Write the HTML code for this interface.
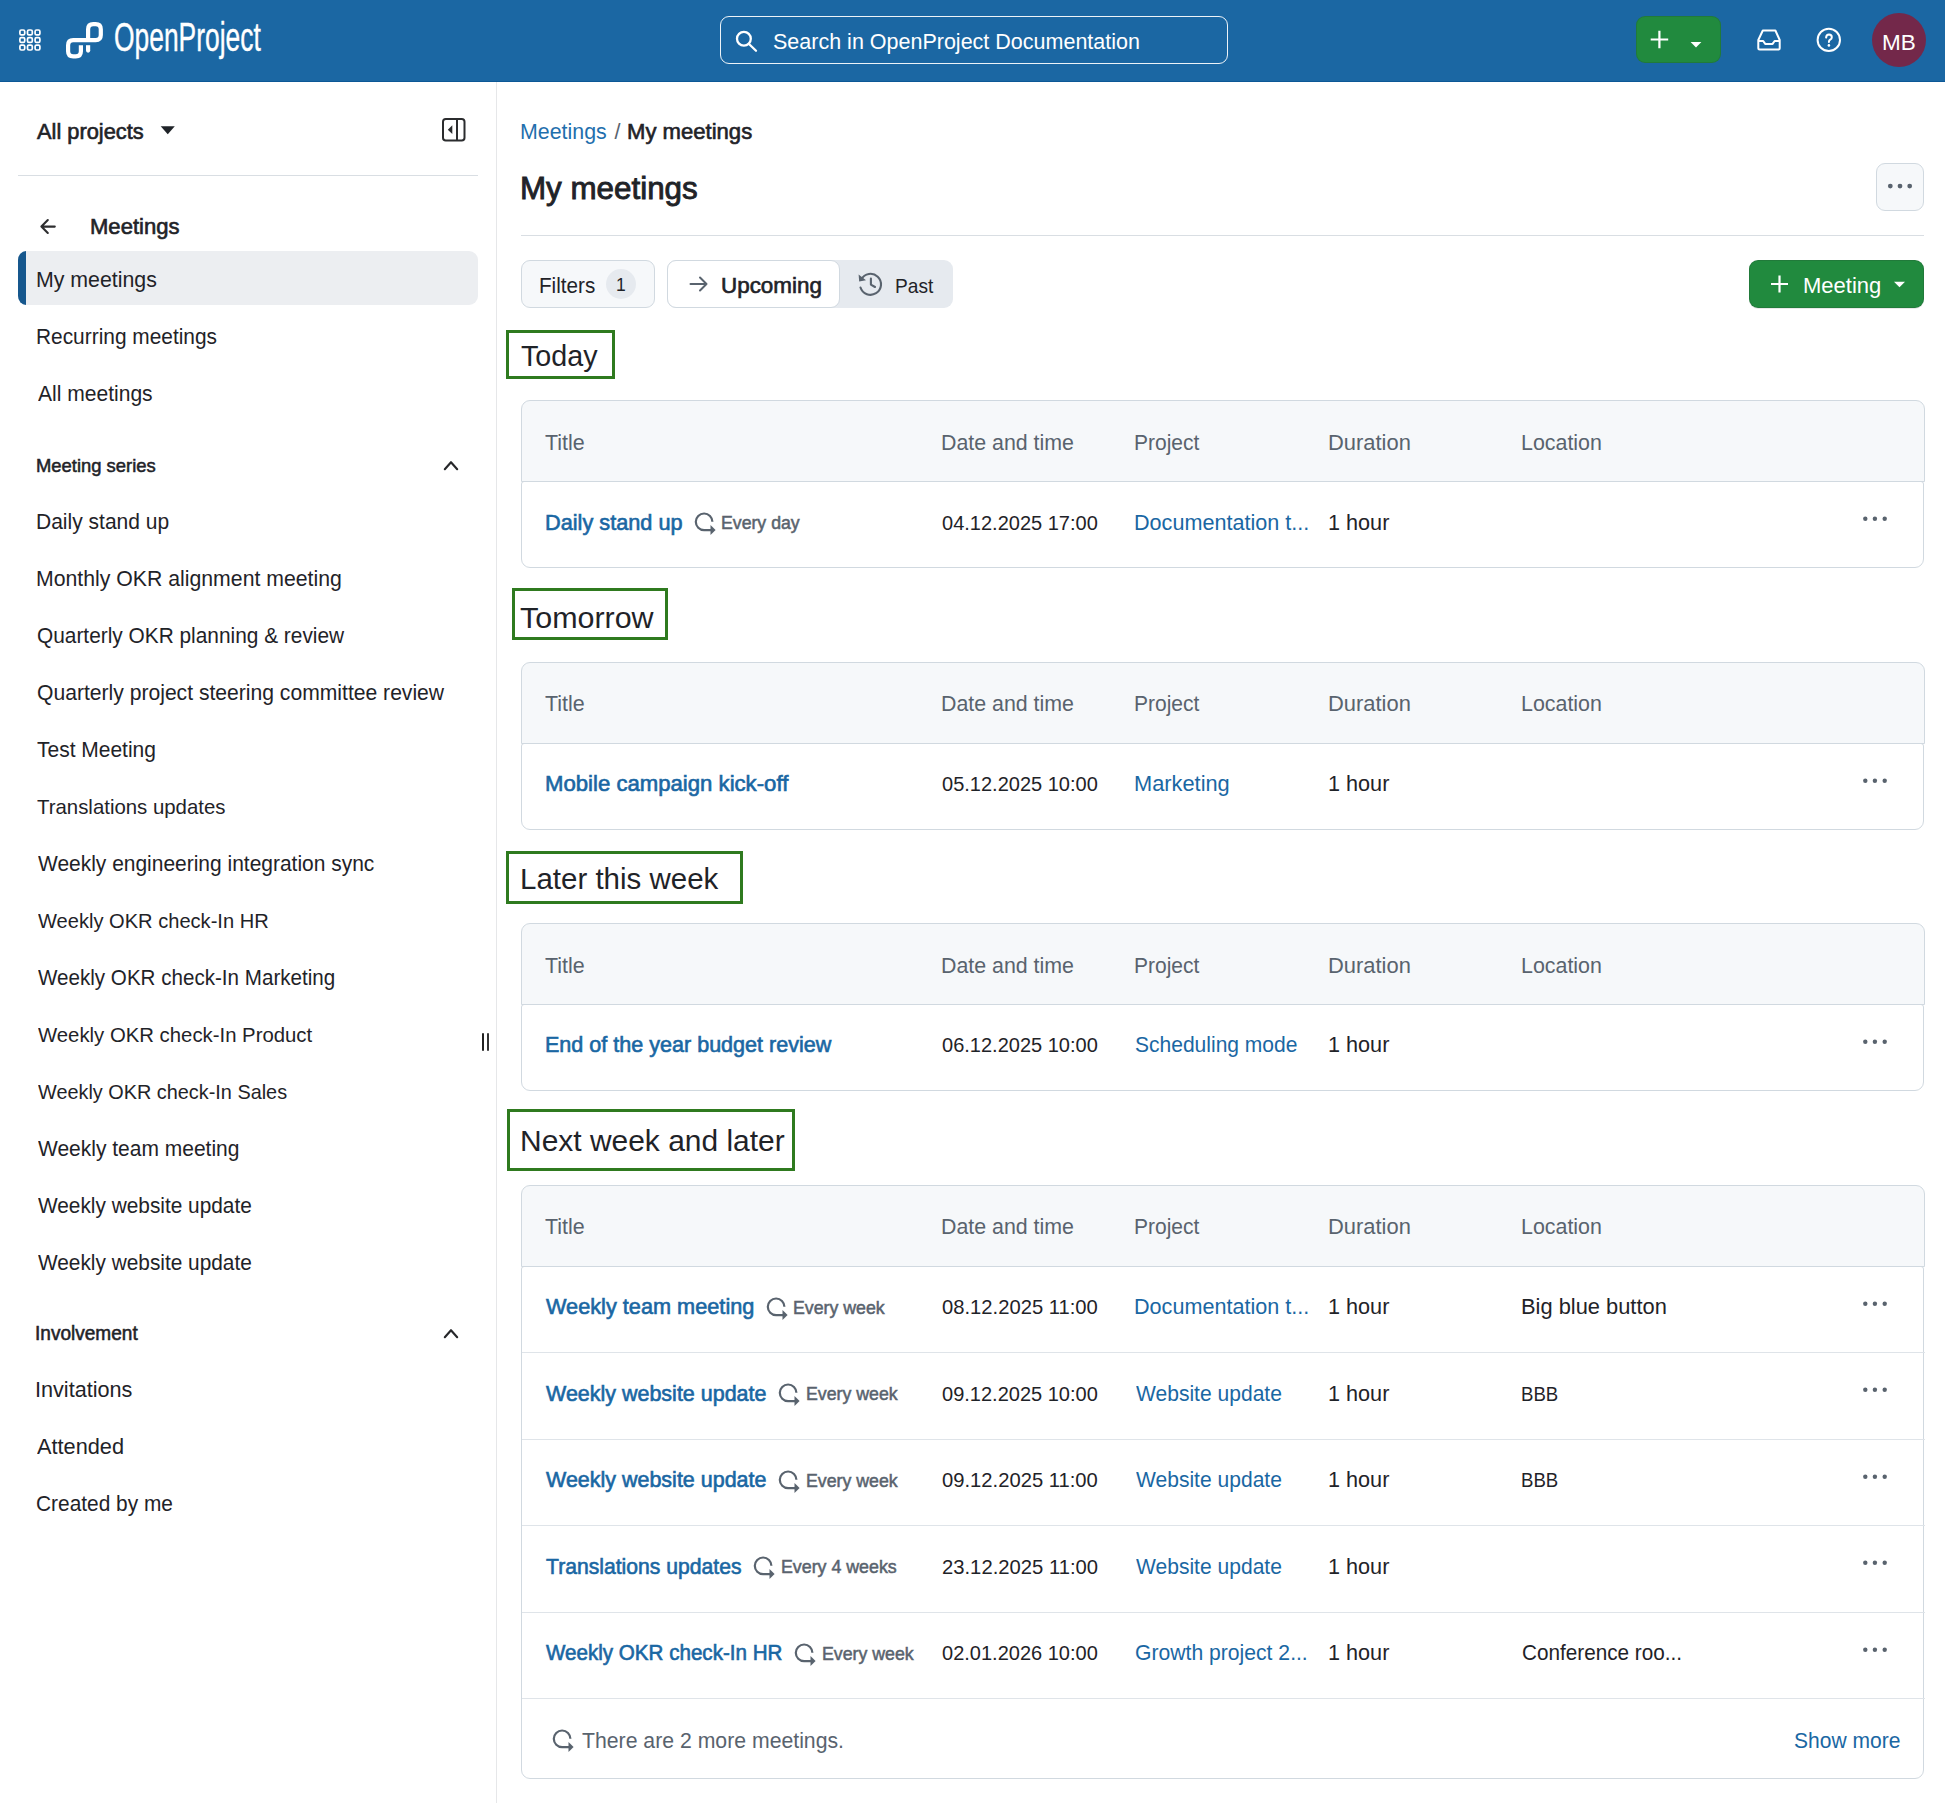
<!DOCTYPE html>
<html><head><meta charset="utf-8"><title>My meetings</title>
<style>
html,body{margin:0;padding:0;background:#fff;}
body{width:1945px;height:1803px;position:relative;overflow:hidden;font-family:"Liberation Sans", sans-serif;}
.t{position:absolute;line-height:1;white-space:nowrap;}
svg{overflow:visible;}
</style></head><body>
<div style="position:absolute;left:0.00px;top:0.00px;width:1945.00px;height:82.00px;background:#1b67a3;"></div>
<div style="position:absolute;left:0.00px;top:81.00px;width:1945.00px;height:1.00px;background:#0c5896;"></div>
<svg style="position:absolute;left:0.00px;top:0.00px;" width="60" height="82" viewBox="0 0 60 82"><rect x="19.90" y="30.00" width="4.8" height="4.8" rx="1.4" fill="none" stroke="#fff" stroke-width="1.7"/><rect x="19.90" y="37.60" width="4.8" height="4.8" rx="1.4" fill="none" stroke="#fff" stroke-width="1.7"/><rect x="19.90" y="45.20" width="4.8" height="4.8" rx="1.4" fill="none" stroke="#fff" stroke-width="1.7"/><rect x="27.50" y="30.00" width="4.8" height="4.8" rx="1.4" fill="none" stroke="#fff" stroke-width="1.7"/><rect x="27.50" y="37.60" width="4.8" height="4.8" rx="1.4" fill="none" stroke="#fff" stroke-width="1.7"/><rect x="27.50" y="45.20" width="4.8" height="4.8" rx="1.4" fill="none" stroke="#fff" stroke-width="1.7"/><rect x="35.10" y="30.00" width="4.8" height="4.8" rx="1.4" fill="none" stroke="#fff" stroke-width="1.7"/><rect x="35.10" y="37.60" width="4.8" height="4.8" rx="1.4" fill="none" stroke="#fff" stroke-width="1.7"/><rect x="35.10" y="45.20" width="4.8" height="4.8" rx="1.4" fill="none" stroke="#fff" stroke-width="1.7"/></svg>
<svg style="position:absolute;left:60.00px;top:18.00px;" width="50" height="45" viewBox="0 0 50 45"><g fill="none" stroke="#fff" stroke-width="4.2" stroke-linecap="round" stroke-linejoin="round" transform="translate(-60,-18)"><path d="M88.1 40 V29.2 Q88.1 24.1 93.2 24.1 H95.7 Q100.8 24.1 100.8 29.2 V35 Q100.8 40.1 95.7 40.1 H73.2 Q68.1 40.1 68.1 45.2 V51.3 Q68.1 56.4 73.2 56.4 H75.8 Q80.9 56.4 80.9 51.3 V45.2" stroke-linecap="butt"/><path d="M88.1 45.2 V50.5" stroke-linecap="butt"/><circle cx="88.1" cy="50.6" r="2.1" fill="#fff" stroke="none"/></g></svg>
<div class="t" style="left:114.40px;top:17px;font-size:40.5px;color:#fff;font-weight:400;transform:scaleX(0.652);transform-origin:0 0;-webkit-text-stroke:0.4px #fff;">OpenProject</div>
<div style="position:absolute;left:720.00px;top:16.00px;width:508.00px;height:48.00px;border:1.5px solid rgba(255,255,255,0.92);border-radius:9px;box-sizing:border-box;"></div>
<svg style="position:absolute;left:730.00px;top:25.00px;" width="32" height="32" viewBox="0 0 32 32"><g fill="none" stroke="#fff" stroke-width="2.3" stroke-linecap="round"><circle cx="13.9" cy="13.8" r="6.9"/><path d="M19 19 L26 25.8"/></g></svg>
<div class="t" style="left:773.03px;top:31px;font-size:22.06px;color:#fff;font-weight:400;transform:scaleX(0.9753);transform-origin:0 0;">Search in OpenProject Documentation</div>
<div style="position:absolute;left:1636.00px;top:16.00px;width:85.00px;height:47.00px;background:#218a3e;border-radius:9px;border:1px solid rgba(31,35,40,0.15);box-sizing:border-box;"></div>
<svg style="position:absolute;left:1636.00px;top:16.00px;" width="85" height="47" viewBox="0 0 85 47"><g stroke="#fff" stroke-width="2.2" fill="none"><path d="M23.4 14.8 V32.3 M14.7 23.5 H32.2"/></g><path d="M54.6 26 L65.4 26 L60 31.5 Z" fill="#fff"/></svg>
<svg style="position:absolute;left:1752.00px;top:24.00px;" width="34" height="32" viewBox="0 0 34 32"><g fill="none" stroke="#fff" stroke-width="2" stroke-linejoin="round"><path d="M10.8 6.5 H23.4 L27.7 16 V24 Q27.7 25.5 26.2 25.5 H7.8 Q6.3 25.5 6.3 24 V16 Z"/><path d="M6.3 17 H11.2 L13.2 19.9 H20.6 L22.6 17 H27.7"/></g></svg>
<svg style="position:absolute;left:1810.00px;top:22.00px;" width="38" height="38" viewBox="0 0 38 38"><circle cx="18.8" cy="17.9" r="11.2" fill="none" stroke="#fff" stroke-width="2"/><path d="M16.1 15.6 Q16.3 12.6 19 12.6 Q21.8 12.7 21.8 15.2 Q21.8 16.8 20.2 17.7 Q18.9 18.4 18.9 20" fill="none" stroke="#fff" stroke-width="2" stroke-linecap="round"/><circle cx="18.9" cy="23.4" r="1.3" fill="#fff"/></svg>
<div style="position:absolute;left:1872.00px;top:13.00px;width:54.00px;height:54.00px;background:#73284a;border-radius:50%;"></div>
<div class="t" style="left:1882.00px;top:32px;font-size:22.5px;color:#fff;font-weight:400;">MB</div>
<div style="position:absolute;left:496.00px;top:82.00px;width:1.00px;height:1721.00px;background:#e6e7e9;"></div>
<div class="t" style="left:37.30px;top:121px;font-size:22.06px;color:#1f2328;font-weight:400;-webkit-text-stroke:0.63px #1f2328;transform:scaleX(0.9888);transform-origin:0 0;">All projects</div>
<svg style="position:absolute;left:158.00px;top:122.00px;" width="20" height="16" viewBox="0 0 20 16"><path d="M2.7 4.2 H16.8 L9.75 12.2 Z" fill="#1f2328"/></svg>
<svg style="position:absolute;left:440.00px;top:116.00px;" width="27" height="27" viewBox="0 0 27 27"><g fill="none" stroke="#2b2c2e" stroke-width="2"><rect x="3" y="3" width="21.5" height="21.5" rx="2.8"/><path d="M17 3 V24.5"/></g><path d="M12.3 9.2 L7.8 13.7 L12.3 18.1 Z" fill="#2b2c2e"/></svg>
<div style="position:absolute;left:18.00px;top:175.00px;width:460.00px;height:1.00px;background:#d9dee3;"></div>
<svg style="position:absolute;left:36.00px;top:216.00px;" width="24" height="22" viewBox="0 0 24 22"><g fill="none" stroke="#2e2e30" stroke-width="2.1" stroke-linecap="round" stroke-linejoin="round"><path d="M5.4 10.6 H18.8 M11.8 4.1 L5.4 10.6 L11.8 17"/></g></svg>
<div class="t" style="left:90.24px;top:216px;font-size:21.63px;color:#1f2328;font-weight:400;-webkit-text-stroke:0.62px #1f2328;transform:scaleX(1.0196);transform-origin:0 0;">Meetings</div>
<div style="position:absolute;left:18.00px;top:251.00px;width:460.00px;height:54.00px;background:#eceef1;border-radius:9px;"></div>
<div style="position:absolute;left:18.00px;top:251.00px;width:8.00px;height:54.00px;background:#16578d;border-radius:8px 0 0 8px / 9px 0 0 9px;"></div>
<div class="t" style="left:36.09px;top:269px;font-size:21.57px;color:#1f2328;font-weight:400;transform:scaleX(0.9890);transform-origin:0 0;">My meetings</div>
<div class="t" style="left:36.13px;top:327px;font-size:21.34px;color:#1f2328;font-weight:400;transform:scaleX(0.9788);transform-origin:0 0;">Recurring meetings</div>
<div class="t" style="left:37.80px;top:384px;font-size:21.43px;color:#1f2328;font-weight:400;transform:scaleX(0.9824);transform-origin:0 0;">All meetings</div>
<div class="t" style="left:36.33px;top:456px;font-size:19.01px;color:#1f2328;font-weight:400;-webkit-text-stroke:0.54px #1f2328;transform:scaleX(0.9689);transform-origin:0 0;">Meeting series</div>
<svg style="position:absolute;left:438.00px;top:456.00px;" width="26" height="20" viewBox="0 0 26 20"><path d="M6.8 13.2 L13 6.2 L19.2 13.2" fill="none" stroke="#26272a" stroke-width="2.1" stroke-linecap="round" stroke-linejoin="round"/></svg>
<div class="t" style="left:36.12px;top:512px;font-size:21.41px;color:#1f2328;font-weight:400;transform:scaleX(0.9815);transform-origin:0 0;">Daily stand up</div>
<div class="t" style="left:36.10px;top:569px;font-size:21.52px;color:#1f2328;font-weight:400;transform:scaleX(0.9874);transform-origin:0 0;">Monthly OKR alignment meeting</div>
<div class="t" style="left:36.86px;top:626px;font-size:21.33px;color:#1f2328;font-weight:400;transform:scaleX(0.9776);transform-origin:0 0;">Quarterly OKR planning &amp; review</div>
<div class="t" style="left:36.85px;top:683px;font-size:21.46px;color:#1f2328;font-weight:400;transform:scaleX(0.9840);transform-origin:0 0;">Quarterly project steering committee review</div>
<div class="t" style="left:37.38px;top:740px;font-size:21.39px;color:#1f2328;font-weight:400;transform:scaleX(0.9811);transform-origin:0 0;">Test Meeting</div>
<div class="t" style="left:37.39px;top:796px;font-size:21.1px;color:#1f2328;font-weight:400;transform:scaleX(0.9664);transform-origin:0 0;">Translations updates</div>
<div class="t" style="left:37.70px;top:854px;font-size:21.38px;color:#1f2328;font-weight:400;transform:scaleX(0.9804);transform-origin:0 0;">Weekly engineering integration sync</div>
<div class="t" style="left:37.70px;top:911px;font-size:20.94px;color:#1f2328;font-weight:400;transform:scaleX(0.9593);transform-origin:0 0;">Weekly OKR check-In HR</div>
<div class="t" style="left:37.70px;top:967px;font-size:21.2px;color:#1f2328;font-weight:400;transform:scaleX(0.9720);transform-origin:0 0;">Weekly OKR check-In Marketing</div>
<div class="t" style="left:37.70px;top:1024px;font-size:21.07px;color:#1f2328;font-weight:400;transform:scaleX(0.9651);transform-origin:0 0;">Weekly OKR check-In Product</div>
<div class="t" style="left:37.70px;top:1082px;font-size:20.83px;color:#1f2328;font-weight:400;transform:scaleX(0.9536);transform-origin:0 0;">Weekly OKR check-In Sales</div>
<div class="t" style="left:37.70px;top:1139px;font-size:21.4px;color:#1f2328;font-weight:400;transform:scaleX(0.9812);transform-origin:0 0;">Weekly team meeting</div>
<div class="t" style="left:37.70px;top:1196px;font-size:21.32px;color:#1f2328;font-weight:400;transform:scaleX(0.9771);transform-origin:0 0;">Weekly website update</div>
<div class="t" style="left:37.70px;top:1253px;font-size:21.32px;color:#1f2328;font-weight:400;transform:scaleX(0.9771);transform-origin:0 0;">Weekly website update</div>
<div class="t" style="left:35.38px;top:1324px;font-size:19.33px;color:#1f2328;font-weight:400;-webkit-text-stroke:0.55px #1f2328;transform:scaleX(0.9858);transform-origin:0 0;">Involvement</div>
<svg style="position:absolute;left:438.00px;top:1324.00px;" width="26" height="20" viewBox="0 0 26 20"><path d="M6.8 13.2 L13 6.2 L19.2 13.2" fill="none" stroke="#26272a" stroke-width="2.1" stroke-linecap="round" stroke-linejoin="round"/></svg>
<div class="t" style="left:35.15px;top:1379px;font-size:21.72px;color:#1f2328;font-weight:400;transform:scaleX(0.9965);transform-origin:0 0;">Invitations</div>
<div class="t" style="left:37.10px;top:1436px;font-size:21.78px;color:#1f2328;font-weight:400;transform:scaleX(0.9988);transform-origin:0 0;">Attended</div>
<div class="t" style="left:36.06px;top:1494px;font-size:21.34px;color:#1f2328;font-weight:400;transform:scaleX(0.9785);transform-origin:0 0;">Created by me</div>
<div style="position:absolute;left:482.20px;top:1033.00px;width:2.20px;height:18.00px;background:#222;border-radius:1px;"></div>
<div style="position:absolute;left:486.70px;top:1033.00px;width:2.20px;height:18.00px;background:#333;border-radius:1px;"></div>
<div class="t" style="left:520.29px;top:121px;font-size:21.83px;color:#1f6fad;font-weight:400;transform:scaleX(0.9789);transform-origin:0 0;">Meetings</div>
<div class="t" style="left:614.60px;top:122px;font-size:21.5px;color:#59636e;font-weight:400;">/</div>
<div class="t" style="left:627.03px;top:121px;font-size:22.19px;color:#1f2328;font-weight:400;-webkit-text-stroke:0.63px #1f2328;transform:scaleX(0.9954);transform-origin:0 0;">My meetings</div>
<div class="t" style="left:520.19px;top:173px;font-size:30.63px;color:#1f2328;font-weight:400;-webkit-text-stroke:0.88px #1f2328;transform:scaleX(1.0238);transform-origin:0 0;">My meetings</div>
<div style="position:absolute;left:1876.00px;top:163.00px;width:48.00px;height:48.00px;background:#f6f8fa;border:1px solid #d1d9e0;border-radius:9px;box-sizing:border-box;"></div>
<svg style="position:absolute;left:1876.00px;top:163.00px;" width="48" height="48" viewBox="0 0 48 48"><g fill="#59636e"><circle cx="14.3" cy="23.1" r="2.4"/><circle cx="24" cy="23.1" r="2.4"/><circle cx="33.7" cy="23.1" r="2.4"/></g></svg>
<div style="position:absolute;left:521.00px;top:235.00px;width:1403.00px;height:1.00px;background:#d9dee3;"></div>
<div style="position:absolute;left:521.40px;top:260.00px;width:133.20px;height:47.60px;background:#f6f8fa;border:1px solid #d1d9e0;border-radius:9px;box-sizing:border-box;"></div>
<div class="t" style="left:538.55px;top:275px;font-size:21.63px;color:#1f2328;font-weight:400;transform:scaleX(0.9548);transform-origin:0 0;">Filters</div>
<div style="position:absolute;left:606.00px;top:268.60px;width:30.00px;height:30.00px;background:#e6eaef;border-radius:50%;"></div>
<div class="t" style="left:615.89px;top:277px;font-size:17.5px;color:#1f2328;font-weight:400;">1</div>
<div style="position:absolute;left:667.00px;top:260.00px;width:285.50px;height:47.60px;background:#e6eaef;border-radius:9px;"></div>
<div style="position:absolute;left:667.00px;top:260.00px;width:172.50px;height:47.60px;background:#fff;border:1px solid #d1d9e0;border-radius:9px;box-sizing:border-box;"></div>
<svg style="position:absolute;left:684.00px;top:272.00px;" width="28" height="24" viewBox="0 0 28 24"><g fill="none" stroke="#59636e" stroke-width="2" stroke-linecap="round" stroke-linejoin="round"><path d="M6.5 12 H22.5 M16 5.5 L22.5 12 L16 18.5"/></g></svg>
<div class="t" style="left:721.12px;top:275px;font-size:22.5px;color:#1f2328;font-weight:400;-webkit-text-stroke:0.64px #1f2328;transform:scaleX(0.9959);transform-origin:0 0;">Upcoming</div>
<svg style="position:absolute;left:854.00px;top:269.00px;" width="34" height="30" viewBox="0 0 34 30"><g fill="none" stroke="#59636e" stroke-width="2.1" stroke-linecap="round" stroke-linejoin="round"><path d="M7.3 10.3 A10.5 10.5 0 1 1 6.5 18.5"/><path d="M16.9 9.6 V15.6 L21 18"/></g><path d="M4.6 5.6 L5.2 12.6 L12 11.2 Z" fill="#59636e"/></svg>
<div class="t" style="left:895.17px;top:276px;font-size:20.86px;color:#1f2328;font-weight:400;transform:scaleX(0.9162);transform-origin:0 0;">Past</div>
<div style="position:absolute;left:1749.00px;top:260.00px;width:175.00px;height:48.00px;background:#218a3e;border-radius:9px;border:1px solid rgba(31,35,40,0.15);box-sizing:border-box;box-shadow:0 1px 0 rgba(31,35,40,0.1);"></div>
<svg style="position:absolute;left:1749.00px;top:260.00px;" width="175" height="47.4" viewBox="0 0 175 47.4"><g stroke="#fff" stroke-width="2.2"><path d="M30.5 15.5 V32.5 M22 24 H39"/></g><path d="M145 21.7 L156 21.7 L150.5 27.3 Z" fill="#fff"/></svg>
<div class="t" style="left:1803.24px;top:275px;font-size:22.3px;color:#fff;font-weight:400;transform:scaleX(0.9863);transform-origin:0 0;">Meeting</div>
<div style="position:absolute;left:506.00px;top:330.00px;width:109.00px;height:49.00px;border:3px solid #2f7a1f;box-sizing:border-box;"></div>
<div class="t" style="left:521.43px;top:341px;font-size:29.49px;color:#1f2328;font-weight:400;transform:scaleX(0.9725);transform-origin:0 0;">Today</div>
<div style="position:absolute;left:521.30px;top:481.00px;width:1403.00px;height:87.00px;border:1px solid #d1d9e0;border-radius:3px 3px 9px 9px;box-sizing:border-box;background:#fff;"></div>
<div style="position:absolute;left:520.50px;top:400.00px;width:1404.50px;height:82.00px;border:1px solid #d1d9e0;border-radius:9px 9px 0 0;box-sizing:border-box;background:#f6f8fa;"></div>
<div class="t" style="left:544.67px;top:432px;font-size:21.73px;color:#59636e;font-weight:400;transform:scaleX(0.9874);transform-origin:0 0;">Title</div>
<div class="t" style="left:940.89px;top:432px;font-size:21.68px;color:#59636e;font-weight:400;transform:scaleX(0.9853);transform-origin:0 0;">Date and time</div>
<div class="t" style="left:1134.22px;top:433px;font-size:21.5px;color:#59636e;font-weight:400;transform:scaleX(0.9764);transform-origin:0 0;">Project</div>
<div class="t" style="left:1327.95px;top:432px;font-size:21.96px;color:#59636e;font-weight:400;transform:scaleX(0.9984);transform-origin:0 0;">Duration</div>
<div class="t" style="left:1521.39px;top:432px;font-size:21.7px;color:#59636e;font-weight:400;transform:scaleX(0.9863);transform-origin:0 0;">Location</div>
<div class="t" style="left:544.76px;top:512px;font-size:21.75px;color:#1a67a3;font-weight:400;-webkit-text-stroke:0.62px #1a67a3;transform:scaleX(0.9980);transform-origin:0 0;">Daily stand up</div>
<svg style="position:absolute;left:693.70px;top:511.10px;" width="24" height="24" viewBox="0 0 24 24"><g fill="none" stroke="#59636e" stroke-width="2.2"><path d="M18.4 10.8 A8.3 8.3 0 1 0 10.1 19.1 H17"/></g><path d="M16.5 14 L21.6 19.1 L16.5 24.1 Z" fill="#59636e"/></svg>
<div class="t" style="left:721.48px;top:514px;font-size:18.05px;color:#59636e;font-weight:400;-webkit-text-stroke:0.52px #59636e;transform:scaleX(0.9811);transform-origin:0 0;">Every day</div>
<div class="t" style="left:941.80px;top:513px;font-size:20.91px;color:#1f2328;font-weight:400;transform:scaleX(0.9571);transform-origin:0 0;">04.12.2025 17:00</div>
<div class="t" style="left:1134.17px;top:512px;font-size:21.71px;color:#1a67a3;font-weight:400;transform:scaleX(0.9954);transform-origin:0 0;">Documentation t...</div>
<div class="t" style="left:1328.18px;top:512px;font-size:21.72px;color:#1f2328;font-weight:400;transform:scaleX(0.9963);transform-origin:0 0;">1 hour</div>
<svg style="position:absolute;left:1855.00px;top:509.10px;" width="40" height="20" viewBox="0 0 40 20"><g fill="#59636e"><circle cx="10.3" cy="9.7" r="2.2"/><circle cx="19.9" cy="9.7" r="2.2"/><circle cx="29.7" cy="9.7" r="2.2"/></g></svg>
<div style="position:absolute;left:512.00px;top:588.00px;width:156.00px;height:52.00px;border:3px solid #2f7a1f;box-sizing:border-box;"></div>
<div class="t" style="left:520.09px;top:603px;font-size:30.37px;color:#1f2328;font-weight:400;transform:scaleX(1.0025);transform-origin:0 0;">Tomorrow</div>
<div style="position:absolute;left:521.30px;top:742.50px;width:1403.00px;height:87.00px;border:1px solid #d1d9e0;border-radius:3px 3px 9px 9px;box-sizing:border-box;background:#fff;"></div>
<div style="position:absolute;left:520.50px;top:662.00px;width:1404.50px;height:81.50px;border:1px solid #d1d9e0;border-radius:9px 9px 0 0;box-sizing:border-box;background:#f6f8fa;"></div>
<div class="t" style="left:544.67px;top:693px;font-size:21.73px;color:#59636e;font-weight:400;transform:scaleX(0.9874);transform-origin:0 0;">Title</div>
<div class="t" style="left:940.89px;top:693px;font-size:21.68px;color:#59636e;font-weight:400;transform:scaleX(0.9853);transform-origin:0 0;">Date and time</div>
<div class="t" style="left:1134.22px;top:694px;font-size:21.5px;color:#59636e;font-weight:400;transform:scaleX(0.9764);transform-origin:0 0;">Project</div>
<div class="t" style="left:1327.95px;top:693px;font-size:21.96px;color:#59636e;font-weight:400;transform:scaleX(0.9984);transform-origin:0 0;">Duration</div>
<div class="t" style="left:1521.39px;top:693px;font-size:21.7px;color:#59636e;font-weight:400;transform:scaleX(0.9863);transform-origin:0 0;">Location</div>
<div class="t" style="left:544.73px;top:773px;font-size:21.97px;color:#1a67a3;font-weight:400;-webkit-text-stroke:0.63px #1a67a3;transform:scaleX(1.0080);transform-origin:0 0;">Mobile campaign kick-off</div>
<div class="t" style="left:941.80px;top:774px;font-size:20.91px;color:#1f2328;font-weight:400;transform:scaleX(0.9571);transform-origin:0 0;">05.12.2025 10:00</div>
<div class="t" style="left:1134.15px;top:773px;font-size:21.81px;color:#1a67a3;font-weight:400;transform:scaleX(1.0002);transform-origin:0 0;">Marketing</div>
<div class="t" style="left:1328.18px;top:773px;font-size:21.72px;color:#1f2328;font-weight:400;transform:scaleX(0.9963);transform-origin:0 0;">1 hour</div>
<svg style="position:absolute;left:1855.00px;top:770.60px;" width="40" height="20" viewBox="0 0 40 20"><g fill="#59636e"><circle cx="10.3" cy="9.7" r="2.2"/><circle cx="19.9" cy="9.7" r="2.2"/><circle cx="29.7" cy="9.7" r="2.2"/></g></svg>
<div style="position:absolute;left:506.00px;top:851.00px;width:237.00px;height:53.00px;border:3px solid #2f7a1f;box-sizing:border-box;"></div>
<div class="t" style="left:519.64px;top:864px;font-size:29.9px;color:#1f2328;font-weight:400;transform:scaleX(0.9865);transform-origin:0 0;">Later this week</div>
<div style="position:absolute;left:521.30px;top:1003.50px;width:1403.00px;height:87.00px;border:1px solid #d1d9e0;border-radius:3px 3px 9px 9px;box-sizing:border-box;background:#fff;"></div>
<div style="position:absolute;left:520.50px;top:923.00px;width:1404.50px;height:81.50px;border:1px solid #d1d9e0;border-radius:9px 9px 0 0;box-sizing:border-box;background:#f6f8fa;"></div>
<div class="t" style="left:544.67px;top:955px;font-size:21.73px;color:#59636e;font-weight:400;transform:scaleX(0.9874);transform-origin:0 0;">Title</div>
<div class="t" style="left:940.89px;top:955px;font-size:21.68px;color:#59636e;font-weight:400;transform:scaleX(0.9853);transform-origin:0 0;">Date and time</div>
<div class="t" style="left:1134.22px;top:956px;font-size:21.5px;color:#59636e;font-weight:400;transform:scaleX(0.9764);transform-origin:0 0;">Project</div>
<div class="t" style="left:1327.95px;top:955px;font-size:21.96px;color:#59636e;font-weight:400;transform:scaleX(0.9984);transform-origin:0 0;">Duration</div>
<div class="t" style="left:1521.39px;top:955px;font-size:21.7px;color:#59636e;font-weight:400;transform:scaleX(0.9863);transform-origin:0 0;">Location</div>
<div class="t" style="left:544.78px;top:1034px;font-size:21.68px;color:#1a67a3;font-weight:400;-webkit-text-stroke:0.62px #1a67a3;transform:scaleX(0.9944);transform-origin:0 0;">End of the year budget review</div>
<div class="t" style="left:941.80px;top:1035px;font-size:20.91px;color:#1f2328;font-weight:400;transform:scaleX(0.9571);transform-origin:0 0;">06.12.2025 10:00</div>
<div class="t" style="left:1134.95px;top:1035px;font-size:21.42px;color:#1a67a3;font-weight:400;transform:scaleX(0.9820);transform-origin:0 0;">Scheduling mode</div>
<div class="t" style="left:1328.18px;top:1034px;font-size:21.72px;color:#1f2328;font-weight:400;transform:scaleX(0.9963);transform-origin:0 0;">1 hour</div>
<svg style="position:absolute;left:1855.00px;top:1031.60px;" width="40" height="20" viewBox="0 0 40 20"><g fill="#59636e"><circle cx="10.3" cy="9.7" r="2.2"/><circle cx="19.9" cy="9.7" r="2.2"/><circle cx="29.7" cy="9.7" r="2.2"/></g></svg>
<div style="position:absolute;left:507.00px;top:1109.00px;width:288.00px;height:62.00px;border:3px solid #2f7a1f;box-sizing:border-box;"></div>
<div class="t" style="left:519.60px;top:1126px;font-size:30.13px;color:#1f2328;font-weight:400;transform:scaleX(0.9942);transform-origin:0 0;">Next week and later</div>
<div style="position:absolute;left:521.30px;top:1265.50px;width:1403.00px;height:513.00px;border:1px solid #d1d9e0;border-radius:3px 3px 9px 9px;box-sizing:border-box;background:#fff;"></div>
<div style="position:absolute;left:520.50px;top:1185.00px;width:1404.50px;height:81.50px;border:1px solid #d1d9e0;border-radius:9px 9px 0 0;box-sizing:border-box;background:#f6f8fa;"></div>
<div class="t" style="left:544.67px;top:1216px;font-size:21.73px;color:#59636e;font-weight:400;transform:scaleX(0.9874);transform-origin:0 0;">Title</div>
<div class="t" style="left:940.89px;top:1216px;font-size:21.68px;color:#59636e;font-weight:400;transform:scaleX(0.9853);transform-origin:0 0;">Date and time</div>
<div class="t" style="left:1134.22px;top:1217px;font-size:21.5px;color:#59636e;font-weight:400;transform:scaleX(0.9764);transform-origin:0 0;">Project</div>
<div class="t" style="left:1327.95px;top:1216px;font-size:21.96px;color:#59636e;font-weight:400;transform:scaleX(0.9984);transform-origin:0 0;">Duration</div>
<div class="t" style="left:1521.39px;top:1216px;font-size:21.7px;color:#59636e;font-weight:400;transform:scaleX(0.9863);transform-origin:0 0;">Location</div>
<div class="t" style="left:546.39px;top:1296px;font-size:21.76px;color:#1a67a3;font-weight:400;-webkit-text-stroke:0.62px #1a67a3;transform:scaleX(0.9982);transform-origin:0 0;">Weekly team meeting</div>
<svg style="position:absolute;left:765.70px;top:1295.60px;" width="24" height="24" viewBox="0 0 24 24"><g fill="none" stroke="#59636e" stroke-width="2.2"><path d="M18.4 10.8 A8.3 8.3 0 1 0 10.1 19.1 H17"/></g><path d="M16.5 14 L21.6 19.1 L16.5 24.1 Z" fill="#59636e"/></svg>
<div class="t" style="left:793.48px;top:1299px;font-size:18.07px;color:#59636e;font-weight:400;-webkit-text-stroke:0.52px #59636e;transform:scaleX(0.9818);transform-origin:0 0;">Every week</div>
<div class="t" style="left:941.79px;top:1296px;font-size:21.0px;color:#1f2328;font-weight:400;transform:scaleX(0.9624);transform-origin:0 0;">08.12.2025 11:00</div>
<div class="t" style="left:1134.17px;top:1296px;font-size:21.71px;color:#1a67a3;font-weight:400;transform:scaleX(0.9954);transform-origin:0 0;">Documentation t...</div>
<div class="t" style="left:1328.18px;top:1296px;font-size:21.72px;color:#1f2328;font-weight:400;transform:scaleX(0.9963);transform-origin:0 0;">1 hour</div>
<div class="t" style="left:1521.05px;top:1296px;font-size:21.83px;color:#1f2328;font-weight:400;transform:scaleX(1.0011);transform-origin:0 0;">Big blue button</div>
<svg style="position:absolute;left:1855.00px;top:1293.60px;" width="40" height="20" viewBox="0 0 40 20"><g fill="#59636e"><circle cx="10.3" cy="9.7" r="2.2"/><circle cx="19.9" cy="9.7" r="2.2"/><circle cx="29.7" cy="9.7" r="2.2"/></g></svg>
<div style="position:absolute;left:521.50px;top:1352.00px;width:1403.00px;height:1.00px;background:#dfe4e9;"></div>
<div class="t" style="left:546.39px;top:1383px;font-size:21.64px;color:#1a67a3;font-weight:400;-webkit-text-stroke:0.62px #1a67a3;transform:scaleX(0.9930);transform-origin:0 0;">Weekly website update</div>
<svg style="position:absolute;left:778.30px;top:1382.10px;" width="24" height="24" viewBox="0 0 24 24"><g fill="none" stroke="#59636e" stroke-width="2.2"><path d="M18.4 10.8 A8.3 8.3 0 1 0 10.1 19.1 H17"/></g><path d="M16.5 14 L21.6 19.1 L16.5 24.1 Z" fill="#59636e"/></svg>
<div class="t" style="left:806.08px;top:1385px;font-size:18.07px;color:#59636e;font-weight:400;-webkit-text-stroke:0.52px #59636e;transform:scaleX(0.9818);transform-origin:0 0;">Every week</div>
<div class="t" style="left:941.80px;top:1384px;font-size:20.91px;color:#1f2328;font-weight:400;transform:scaleX(0.9571);transform-origin:0 0;">09.12.2025 10:00</div>
<div class="t" style="left:1135.79px;top:1384px;font-size:21.43px;color:#1a67a3;font-weight:400;transform:scaleX(0.9828);transform-origin:0 0;">Website update</div>
<div class="t" style="left:1328.18px;top:1383px;font-size:21.72px;color:#1f2328;font-weight:400;transform:scaleX(0.9963);transform-origin:0 0;">1 hour</div>
<div class="t" style="left:1521.31px;top:1384px;font-size:20.2px;color:#1f2328;font-weight:400;transform:scaleX(0.9213);transform-origin:0 0;">BBB</div>
<svg style="position:absolute;left:1855.00px;top:1380.10px;" width="40" height="20" viewBox="0 0 40 20"><g fill="#59636e"><circle cx="10.3" cy="9.7" r="2.2"/><circle cx="19.9" cy="9.7" r="2.2"/><circle cx="29.7" cy="9.7" r="2.2"/></g></svg>
<div style="position:absolute;left:521.50px;top:1438.50px;width:1403.00px;height:1.00px;background:#dfe4e9;"></div>
<div class="t" style="left:546.39px;top:1469px;font-size:21.64px;color:#1a67a3;font-weight:400;-webkit-text-stroke:0.62px #1a67a3;transform:scaleX(0.9930);transform-origin:0 0;">Weekly website update</div>
<svg style="position:absolute;left:778.30px;top:1468.60px;" width="24" height="24" viewBox="0 0 24 24"><g fill="none" stroke="#59636e" stroke-width="2.2"><path d="M18.4 10.8 A8.3 8.3 0 1 0 10.1 19.1 H17"/></g><path d="M16.5 14 L21.6 19.1 L16.5 24.1 Z" fill="#59636e"/></svg>
<div class="t" style="left:806.08px;top:1472px;font-size:18.07px;color:#59636e;font-weight:400;-webkit-text-stroke:0.52px #59636e;transform:scaleX(0.9818);transform-origin:0 0;">Every week</div>
<div class="t" style="left:941.79px;top:1469px;font-size:21.0px;color:#1f2328;font-weight:400;transform:scaleX(0.9624);transform-origin:0 0;">09.12.2025 11:00</div>
<div class="t" style="left:1135.79px;top:1470px;font-size:21.43px;color:#1a67a3;font-weight:400;transform:scaleX(0.9828);transform-origin:0 0;">Website update</div>
<div class="t" style="left:1328.18px;top:1469px;font-size:21.72px;color:#1f2328;font-weight:400;transform:scaleX(0.9963);transform-origin:0 0;">1 hour</div>
<div class="t" style="left:1521.31px;top:1470px;font-size:20.2px;color:#1f2328;font-weight:400;transform:scaleX(0.9213);transform-origin:0 0;">BBB</div>
<svg style="position:absolute;left:1855.00px;top:1466.60px;" width="40" height="20" viewBox="0 0 40 20"><g fill="#59636e"><circle cx="10.3" cy="9.7" r="2.2"/><circle cx="19.9" cy="9.7" r="2.2"/><circle cx="29.7" cy="9.7" r="2.2"/></g></svg>
<div style="position:absolute;left:521.50px;top:1525.00px;width:1403.00px;height:1.00px;background:#dfe4e9;"></div>
<div class="t" style="left:546.08px;top:1557px;font-size:21.47px;color:#1a67a3;font-weight:400;-webkit-text-stroke:0.61px #1a67a3;transform:scaleX(0.9847);transform-origin:0 0;">Translations updates</div>
<svg style="position:absolute;left:753.10px;top:1555.10px;" width="24" height="24" viewBox="0 0 24 24"><g fill="none" stroke="#59636e" stroke-width="2.2"><path d="M18.4 10.8 A8.3 8.3 0 1 0 10.1 19.1 H17"/></g><path d="M16.5 14 L21.6 19.1 L16.5 24.1 Z" fill="#59636e"/></svg>
<div class="t" style="left:780.88px;top:1558px;font-size:18.1px;color:#59636e;font-weight:400;-webkit-text-stroke:0.52px #59636e;transform:scaleX(0.9831);transform-origin:0 0;">Every 4 weeks</div>
<div class="t" style="left:941.59px;top:1556px;font-size:21.02px;color:#1f2328;font-weight:400;transform:scaleX(0.9627);transform-origin:0 0;">23.12.2025 11:00</div>
<div class="t" style="left:1135.79px;top:1557px;font-size:21.43px;color:#1a67a3;font-weight:400;transform:scaleX(0.9828);transform-origin:0 0;">Website update</div>
<div class="t" style="left:1328.18px;top:1556px;font-size:21.72px;color:#1f2328;font-weight:400;transform:scaleX(0.9963);transform-origin:0 0;">1 hour</div>
<svg style="position:absolute;left:1855.00px;top:1553.10px;" width="40" height="20" viewBox="0 0 40 20"><g fill="#59636e"><circle cx="10.3" cy="9.7" r="2.2"/><circle cx="19.9" cy="9.7" r="2.2"/><circle cx="29.7" cy="9.7" r="2.2"/></g></svg>
<div style="position:absolute;left:521.50px;top:1611.50px;width:1403.00px;height:1.00px;background:#dfe4e9;"></div>
<div class="t" style="left:546.40px;top:1642px;font-size:21.2px;color:#1a67a3;font-weight:400;-webkit-text-stroke:0.61px #1a67a3;transform:scaleX(0.9715);transform-origin:0 0;">Weekly OKR check-In HR</div>
<svg style="position:absolute;left:794.20px;top:1641.60px;" width="24" height="24" viewBox="0 0 24 24"><g fill="none" stroke="#59636e" stroke-width="2.2"><path d="M18.4 10.8 A8.3 8.3 0 1 0 10.1 19.1 H17"/></g><path d="M16.5 14 L21.6 19.1 L16.5 24.1 Z" fill="#59636e"/></svg>
<div class="t" style="left:821.98px;top:1645px;font-size:18.07px;color:#59636e;font-weight:400;-webkit-text-stroke:0.52px #59636e;transform:scaleX(0.9818);transform-origin:0 0;">Every week</div>
<div class="t" style="left:941.80px;top:1643px;font-size:20.91px;color:#1f2328;font-weight:400;transform:scaleX(0.9571);transform-origin:0 0;">02.01.2026 10:00</div>
<div class="t" style="left:1134.84px;top:1643px;font-size:21.47px;color:#1a67a3;font-weight:400;transform:scaleX(0.9849);transform-origin:0 0;">Growth project 2...</div>
<div class="t" style="left:1328.18px;top:1642px;font-size:21.72px;color:#1f2328;font-weight:400;transform:scaleX(0.9963);transform-origin:0 0;">1 hour</div>
<div class="t" style="left:1521.76px;top:1643px;font-size:21.26px;color:#1f2328;font-weight:400;transform:scaleX(0.9748);transform-origin:0 0;">Conference roo...</div>
<svg style="position:absolute;left:1855.00px;top:1639.60px;" width="40" height="20" viewBox="0 0 40 20"><g fill="#59636e"><circle cx="10.3" cy="9.7" r="2.2"/><circle cx="19.9" cy="9.7" r="2.2"/><circle cx="29.7" cy="9.7" r="2.2"/></g></svg>
<div style="position:absolute;left:521.50px;top:1698.00px;width:1403.00px;height:1.00px;background:#dfe4e9;"></div>
<svg style="position:absolute;left:551.50px;top:1728.00px;" width="24" height="24" viewBox="0 0 24 24"><g fill="none" stroke="#59636e" stroke-width="2.2"><path d="M18.4 10.8 A8.3 8.3 0 1 0 10.1 19.1 H17"/></g><path d="M16.5 14 L21.6 19.1 L16.5 24.1 Z" fill="#59636e"/></svg>
<div class="t" style="left:581.58px;top:1730px;font-size:21.62px;color:#59636e;font-weight:400;transform:scaleX(0.9826);transform-origin:0 0;">There are 2 more meetings.</div>
<div class="t" style="left:1793.65px;top:1731px;font-size:21.53px;color:#1a67a3;font-weight:400;transform:scaleX(0.9785);transform-origin:0 0;">Show more</div>
</body></html>
